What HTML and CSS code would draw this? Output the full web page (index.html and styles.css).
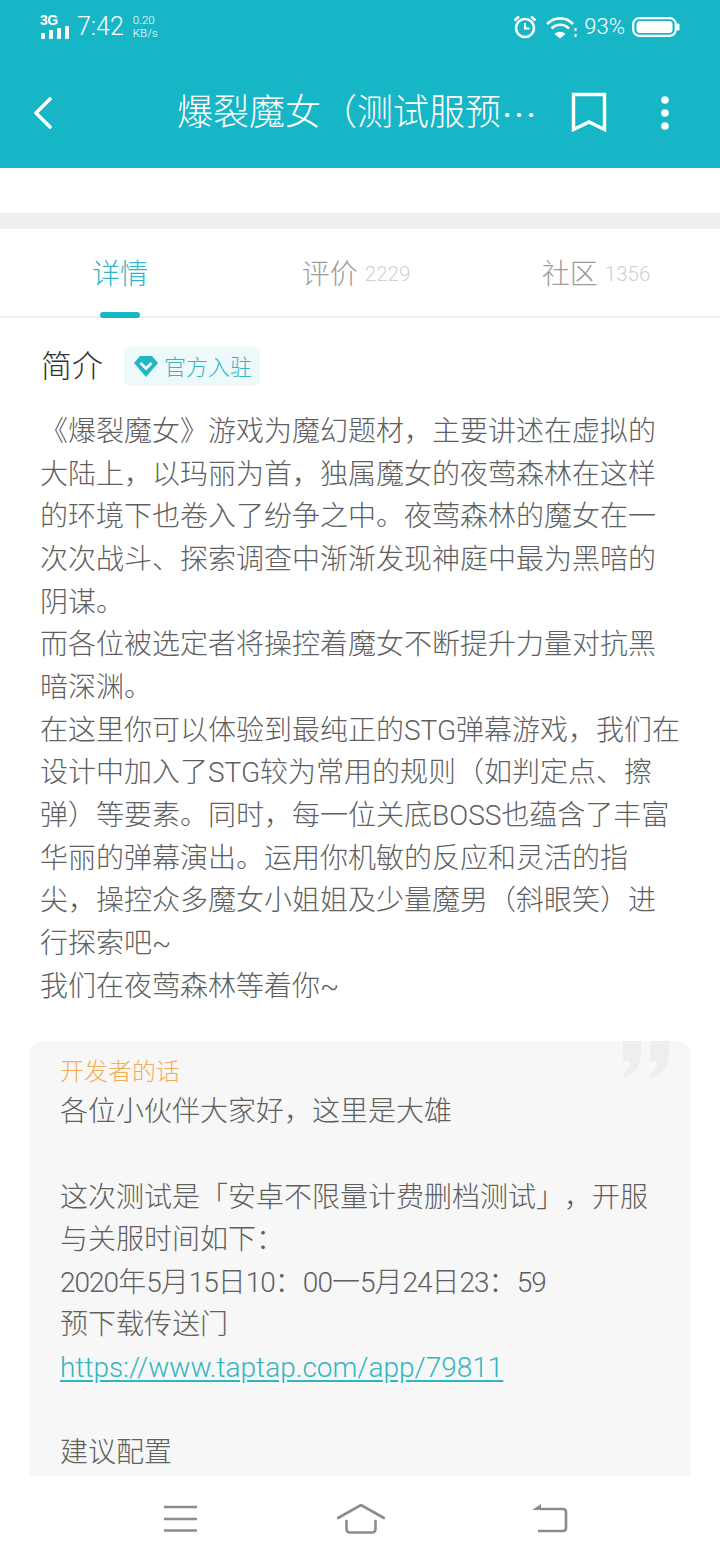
FILE: index.html
```html
<!DOCTYPE html>
<html lang="zh-CN">
<head>
<meta charset="utf-8">
<title>爆裂魔女</title>
<link rel="stylesheet" href="styles.css">
</head>
<body>
<div class="page">
  <header class="appbar">
    <div class="status">
      <div class="status-left">
        <div class="signal">
          <span class="net">3G</span>
          <svg width="30" height="13" viewBox="0 0 30 13"><g fill="#fff"><rect x="1" y="7" width="4" height="6" rx="1"/><rect x="9" y="4" width="4" height="9" rx="1"/><rect x="17" y="2" width="4" height="11" rx="1"/><rect x="25" y="0" width="4" height="13" rx="1"/></g></svg>
        </div>
        <span class="clock">7:42</span>
        <div class="speed"><span>0.20</span><span>KB/s</span></div>
      </div>
      <div class="status-right">
        <svg class="alarm" width="26" height="26" viewBox="0 0 26 26" fill="none" stroke="#fff"><circle cx="13" cy="14" r="9" stroke-width="2.6"/><path d="M13 9v5.500h4.500" stroke-width="2"/><path d="M2.500 6.500 7 2.500M23.500 6.500 19 2.500" stroke-width="2.600"/></svg>
        <svg class="wifi" width="32" height="24" viewBox="0 0 32 24" fill="none" stroke="#fff" stroke-width="2.6"><path d="M1 9C8.500 1.500 20 1.500 27 9"/><path d="M5.500 13.500C10.500 8.500 18 8.500 23 13.500"/><path d="M8.500 19 14 23.500 19.500 19C16 16 12 16 8.500 19Z" fill="#fff" stroke="none"/><path d="M29.500 13v3M29.500 19v3" stroke-width="2"/></svg>
        <span class="pct">93%</span>
        <svg width="48" height="22" viewBox="0 0 48 22"><rect x="1.200" y="2.200" width="42.600" height="17.600" rx="6" fill="none" stroke="#fff" stroke-width="2.200"/><rect x="4.500" y="5" width="36" height="12" rx="3.500" fill="#fff"/><rect x="45" y="7.500" width="2.500" height="7" rx="1.200" fill="#fff"/></svg>
      </div>
    </div>
    <div class="toolbar">
      <svg class="back" width="22" height="32" viewBox="0 0 22 32" fill="none" stroke="#fff" stroke-width="3.600" stroke-linecap="round" stroke-linejoin="round"><path d="M18 2 4 16l14 14"/></svg>
      <h1 class="title"><span class="title-text">爆裂魔女（测试服预</span><span class="title-more">…</span></h1>
      <svg class="bookmark" width="36" height="42" viewBox="0 0 36 42" fill="none" stroke="#fff" stroke-width="3.400" stroke-linejoin="miter"><path d="M2.500 2.500h31v35L18 30 2.500 37.500Z"/></svg>
      <svg class="more" width="12" height="34" viewBox="0 0 12 34" fill="#fff"><circle cx="6" cy="4" r="3.800"/><circle cx="6" cy="17" r="3.800"/><circle cx="6" cy="30" r="3.800"/></svg>
    </div>
  </header>

  <div class="gap"></div>
  <div class="band"></div>

  <nav class="tabs">
    <div class="tab active">详情</div>
    <div class="tab">评价<span class="count">2229</span></div>
    <div class="tab">社区<span class="count">1356</span></div>
  </nav>

  <main class="content">
    <div class="intro-head">
      <h2 class="intro-title">简介</h2>
      <div class="badge">
        <svg width="24" height="21" viewBox="0 0 24 21"><path d="M6 0h12l6 7-12 14L0 7Z" fill="#22b5c5"/><path d="M6.500 7 12 12.500 17.500 7" fill="none" stroke="#eaf8fa" stroke-width="3"/></svg>
        <span class="badge-text">官方入驻</span>
      </div>
    </div>
    <p class="desc">《爆裂魔女》游戏为魔幻题材，主要讲述在虚拟的<br>大陆上，以玛丽为首，独属魔女的夜莺森林在这样<br>的环境下也卷入了纷争之中。夜莺森林的魔女在一<br>次次战斗、探索调查中渐渐发现神庭中最为黑暗的<br>阴谋。<br>而各位被选定者将操控着魔女不断提升力量对抗黑<br>暗深渊。<br>在这里你可以体验到最纯正的STG弹幕游戏，我们在<br>设计中加入了STG较为常用的规则（如判定点、擦<br>弹）等要素。同时，每一位关底BOSS也蕴含了丰富<br>华丽的弹幕演出。运用你机敏的反应和灵活的指<br>尖，操控众多魔女小姐姐及少量魔男（斜眼笑）进<br>行探索吧~<br>我们在夜莺森林等着你~</p>
    <section class="dev">
      <svg class="quote" width="46" height="37" viewBox="0 0 46 37" fill="#eeeeee"><path d="M0 0H18V14C18 26 10 34 1 37L0 33C4 31 7 26 7 20H0Z"/><path d="M27 0H46V14C46 26 37 34 28 37L27 33C31 31 34 26 34 20H27Z"/></svg>
      <h3 class="dev-title">开发者的话</h3>
      <p class="dev-text">各位小伙伴大家好，这里是大雄<br><br>这次测试是「安卓不限量计费删档测试」，开服<br>与关服时间如下：<br><span class="num">2020</span>年<span class="num">5</span>月<span class="num">15</span>日<span class="num">10</span>：<span class="num">00</span>一<span class="num">5</span>月<span class="num">24</span>日<span class="num">23</span>：<span class="num">59</span><br>预下载传送门<br><a class="link">https://www.taptap.com/app/79811</a><br><br>建议配置</p>
    </section>
  </main>

  <footer class="navbar">
    <svg width="36" height="28" viewBox="0 0 36 28" fill="none" stroke="#8c8c8c" stroke-width="2.600"><path d="M0 2h33M0 14h33M0 25.500h33"/></svg>
    <svg class="nav-home" width="48" height="30" viewBox="0 0 48 30" fill="none" stroke="#8c8c8c" stroke-width="2.600" stroke-linecap="round" stroke-linejoin="round"><path d="M1 14 24 1l23 13"/><path d="M9.500 17v8q0 3.500 3.500 3.500h22q3.500 0 3.500-3.500v-8"/></svg>
    <svg class="nav-back" width="36" height="30" viewBox="0 0 36 30" fill="none" stroke="#8c8c8c" stroke-width="2.600"><path d="M6 27h25q3 0 3-3V8q0-3-3-3H8"/><path d="M0 6 9 0v6Z" fill="#8c8c8c" stroke="none"/></svg>
  </footer>
</div>
</body>
</html>
```

FILE: styles.css
```css
* { box-sizing: border-box; margin: 0; padding: 0; }
html, body { width: 720px; height: 1560px; overflow: hidden; background: #fff; }
body { font-family: Roboto, "Noto Sans CJK SC", "Noto Sans", sans-serif; font-weight: 300; text-spacing-trim: space-all; }
.page { width: 720px; height: 1560px; display: flex; flex-direction: column; }

.appbar { height: 168px; background: #17b6c6; color: #fff; display: flex; flex-direction: column; flex: none; }
.status { height: 54px; display: flex; justify-content: space-between; align-items: center; padding: 0 40px 0 40px; }
.status-left, .status-right { display: flex; align-items: center; }
.signal { width: 30px; display: flex; flex-direction: column; }
.net { font: 700 14px/11px "Liberation Sans", sans-serif; letter-spacing: -.5px; }
.clock { font: 300 25px/30px Roboto, sans-serif; margin-left: 7px; }
.speed { display: flex; flex-direction: column; margin-left: 9px; font: 300 11.500px/13px Roboto, sans-serif; }
.status-right { gap: 7px; }
.pct { font: 300 22px/26px Roboto, sans-serif; margin-left: -1px; }
.alarm { margin-right: 1px; }

.toolbar { height: 114px; display: flex; align-items: center; padding: 4px 49px 0 32px; }
.back { flex: none; }
.title { flex: 1; min-width: 0; font-size: 36px; font-weight: 300; line-height: 50px; margin-left: 123px; white-space: nowrap; display: flex; align-items: center; }
.title-more { font-family: "Noto Sans CJK SC", sans-serif; }
.bookmark { flex: none; margin-right: 52px; }
.more { flex: none; }

.gap { height: 45px; flex: none; }
.band { height: 16px; background: #eee; flex: none; }

.tabs { height: 89px; display: grid; grid-template-columns: 240px 240px 240px; border-bottom: 2px solid #eee; flex: none; }
.tab { display: flex; align-items: center; justify-content: center; font-size: 28px; line-height: 36px; color: #9c9c9c; position: relative; padding: 4px 8px 0 0; }
.tab.active { color: #2fb5c3; padding-right: 0; }
.tab.active::after { content: ""; position: absolute; left: 100px; bottom: -2px; width: 40px; height: 6px; border-radius: 3px; background: #17b6c6; }
.count { font: 300 20.500px/1 Roboto, sans-serif; color: #cfcfcf; margin-left: 7px; }

.content { flex: 1; min-height: 0; overflow: hidden; padding: 0 30px; }
.intro-head { display: flex; align-items: center; height: 40px; margin: 29px 0 0 11px; }
.intro-title { font-size: 31px; font-weight: 300; color: #333; line-height: 40px; }
.badge { display: flex; align-items: center; gap: 6px; height: 39px; margin: -2px 0 0 21px; padding: 0 8px 0 10px; background: #eef9fb; border-radius: 6px; color: #33b5c4; font-size: 22px; }
.badge-text { margin-top: -2px; }
.desc { margin: 24px 0 0 10px; font-size: 28px; line-height: 42.650px; color: #5f5f5f; white-space: nowrap; }
.dev { position: relative; margin-top: 33px; height: 500px; padding: 15px 30px 0 30px; background: #f7f7f7; border-radius: 12px 12px 0 0; }
.quote { position: absolute; right: 21px; top: 0; }
.dev-title { font-size: 24px; font-weight: 300; line-height: 33px; color: #f5ad55; }
.dev-text { font-size: 28px; line-height: 42.650px; color: #5f5f5f; white-space: nowrap; margin-top: 2px; }
.num { letter-spacing: -1px; }
.link { color: #2fb5c3; text-decoration: underline; text-underline-offset: 3px; }

.navbar { height: 84px; flex: none; background: #fff; display: flex; align-items: center; padding: 2px 0 0 164px; }
.nav-home { margin-left: 137px; }
.nav-back { margin-left: 147px; }
```
